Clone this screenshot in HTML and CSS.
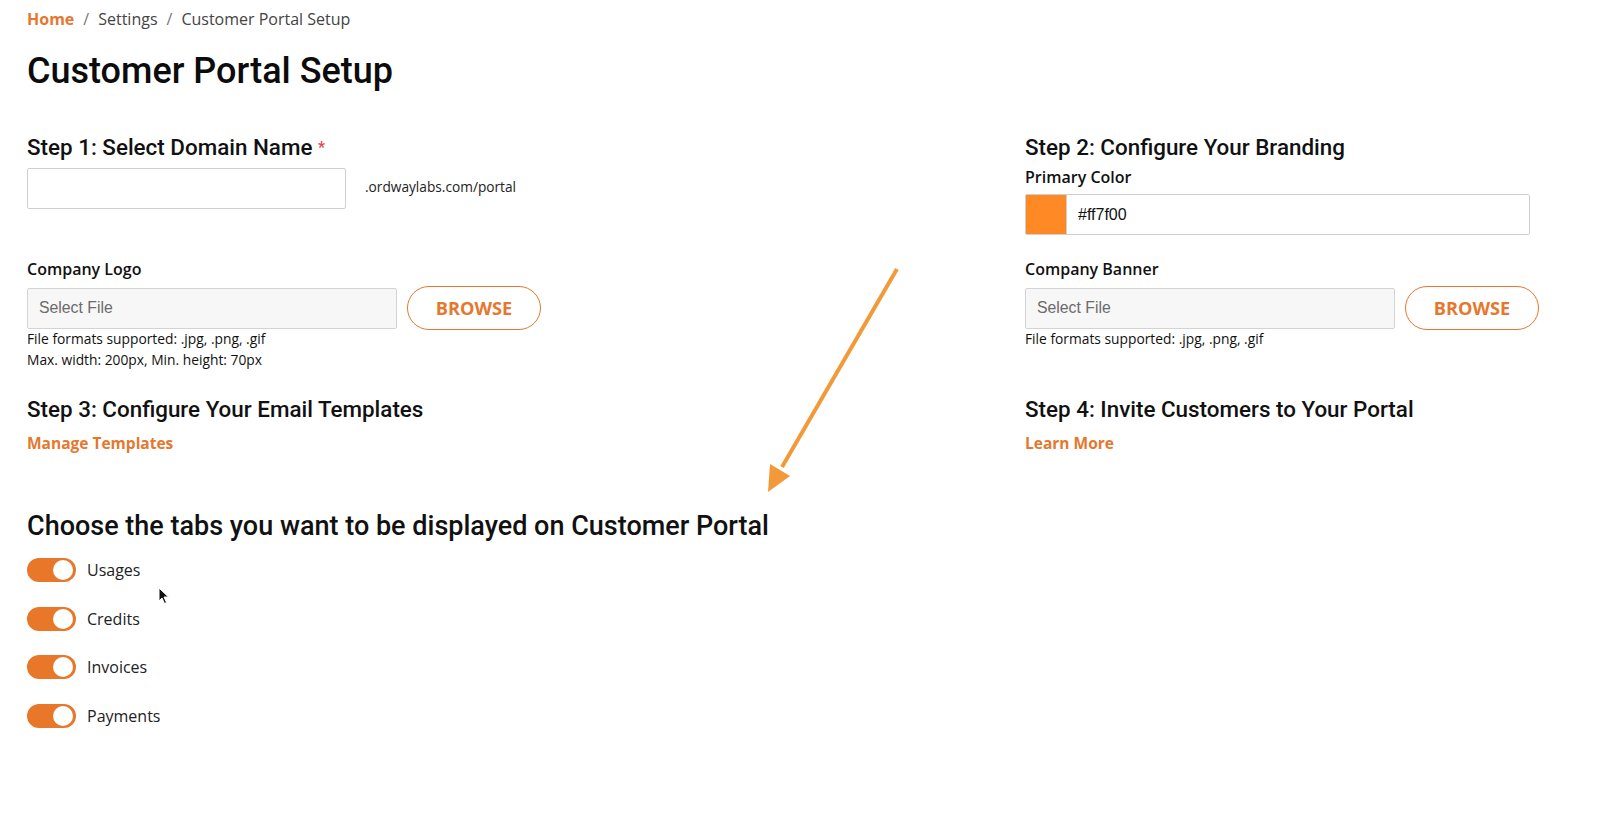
FILE: index.html
```html
<!DOCTYPE html>
<html lang="en">
<head>
    <meta charset="UTF-8">
    <meta name="viewport" content="width=device-width, initial-scale=1.0">
    <title>Customer Portal Setup</title>
    <link rel="stylesheet" href="styles.css">
</head>
<body>
    <div class="page">
        <nav class="breadcrumb">
            <a href="#" class="crumb-home">Home</a>
            <span class="sep">/</span>
            <span>Settings</span>
            <span class="sep">/</span>
            <span>Customer Portal Setup</span>
        </nav>

        <h1 class="page-title">Customer Portal Setup</h1>

        <div class="steps">
            <!-- Step 1 -->
            <div class="cell">
                <h2 class="step-title">Step 1: Select Domain Name <span class="required">*</span></h2>
                <div class="domain-row">
                    <input type="text" class="domain-input">
                    <span class="domain-suffix">.ordwaylabs.com/portal</span>
                </div>
            </div>

            <!-- Step 2 -->
            <div class="cell">
                <h2 class="step-title">Step 2: Configure Your Branding</h2>
                <label class="field-label">Primary Color</label>
                <div class="color-field">
                    <span class="swatch"></span>
                    <input type="text" class="color-input" value="#ff7f00">
                </div>
            </div>

            <div class="cell">
                <label class="field-label">Company Logo</label>
                <div class="file-row">
                    <input type="text" class="file-input" placeholder="Select File" readonly>
                    <button class="browse-btn">BROWSE</button>
                </div>
                <p class="hint">File formats supported: .jpg, .png, .gif</p>
                <p class="hint">Max. width: 200px, Min. height: 70px</p>
            </div>

            <div class="cell">
                <label class="field-label">Company Banner</label>
                <div class="file-row">
                    <input type="text" class="file-input" placeholder="Select File" readonly>
                    <button class="browse-btn">BROWSE</button>
                </div>
                <p class="hint">File formats supported: .jpg, .png, .gif</p>
            </div>

            <!-- Step 3 -->
            <div class="cell">
                <h2 class="step-title">Step 3: Configure Your Email Templates</h2>
                <a href="#" class="link">Manage Templates</a>
            </div>

            <!-- Step 4 -->
            <div class="cell">
                <h2 class="step-title">Step 4: Invite Customers to Your Portal</h2>
                <a href="#" class="link">Learn More</a>
            </div>
        </div>

        <h2 class="tabs-title">Choose the tabs you want to be displayed on Customer Portal</h2>

        <ul class="toggle-list">
            <li class="toggle-item"><span class="toggle"><span class="knob"></span></span>Usages</li>
            <li class="toggle-item"><span class="toggle"><span class="knob"></span></span>Credits</li>
            <li class="toggle-item"><span class="toggle"><span class="knob"></span></span>Invoices</li>
            <li class="toggle-item"><span class="toggle"><span class="knob"></span></span>Payments</li>
        </ul>
    </div>

    <!-- annotation arrow drawn over the page -->
    <svg class="annotation" width="1612" height="832" viewBox="0 0 1612 832">
        <line x1="897" y1="269" x2="782" y2="467" stroke="#f29a3a" stroke-width="4" stroke-linecap="butt"/>
        <polygon points="768,492 770,464 790,476" fill="#f29a3a"/>
    </svg>

    <svg class="cursor" width="12" height="18" viewBox="0 0 12 18">
        <path d="M1 1 L1 14 L4 11 L6.5 16.5 L8.5 15.5 L6 10 L10.5 10 Z" fill="#111" stroke="#fff" stroke-width="1"/>
    </svg>
</body>
</html>
```

FILE: styles.css
```css
* {
    box-sizing: border-box;
}

body {
    margin: 0;
    background: #fff;
    color: #111;
    font-family: 'Open Sans', 'Noto Sans', sans-serif;
}

.page {
    padding: 9px 27px 40px;
}

.breadcrumb {
    display: flex;
    gap: 9px;
    font-size: 16px;
    line-height: 20px;
    color: #444;
}

.breadcrumb .sep {
    color: #777;
}

.crumb-home {
    color: #e5782e;
    font-weight: 700;
    text-decoration: none;
}

.page-title {
    font-family: Roboto, sans-serif;
    font-weight: 500;
    font-size: 36px;
    line-height: 40px;
    margin: 22px 0 0;
    color: #0c0c0c;
}

.steps {
    display: grid;
    grid-template-columns: 1fr 560px;
    margin-top: 43px;
}

.cell:nth-child(3), .cell:nth-child(4) {
    padding-top: 24px;
}

.cell:nth-child(5), .cell:nth-child(6) {
    padding-top: 26px;
}

.step-title {
    font-family: Roboto, sans-serif;
    font-weight: 500;
    font-size: 22.4px;
    line-height: 26px;
    margin: 0;
    color: #111;
}

.required {
    color: #e04848;
    font-size: 16px;
    vertical-align: 2px;
}

.domain-row {
    display: flex;
    align-items: center;
    gap: 19px;
    margin-top: 7px;
}

.domain-input {
    width: 319px;
    height: 41px;
    border: 1px solid #cfcfcf;
    border-radius: 2px;
    background: #fff;
}

.domain-suffix {
    font-size: 13.7px;
    color: #222;
    margin-top: -4px;
}

.field-label {
    display: block;
    font-weight: 600;
    font-size: 16px;
    line-height: 20px;
    color: #111;
    margin-bottom: 7px;
}

.step-title + .field-label {
    margin-top: 7px;
    margin-bottom: 7px;
}

.color-field {
    display: flex;
    width: 505px;
    height: 41px;
    border: 1px solid #cfcfcf;
    border-radius: 2px;
}

.swatch {
    width: 41px;
    background: #ff8a25;
    border-right: 1px solid #cfcfcf;
}

.color-input {
    flex: 1;
    border: none;
    padding: 0 11px;
    font-family: 'Liberation Sans', Arial, sans-serif;
    font-size: 16px;
    color: #111;
    outline: none;
}

.file-row {
    display: flex;
    align-items: center;
    gap: 10px;
}

.file-input {
    width: 370px;
    height: 41px;
    border: 1px solid #d3d3d3;
    border-radius: 2px;
    background: #f7f7f7;
    padding: 0 11px;
    font-family: 'Liberation Sans', Arial, sans-serif;
    font-size: 15.8px;
    outline: none;
}

.file-input::placeholder {
    color: #6b6b6b;
}

.browse-btn {
    width: 134px;
    height: 44px;
    border: 1px solid #e5782e;
    border-radius: 22px;
    background: #fff;
    color: #e5782e;
    font-family: 'Open Sans', sans-serif;
    font-weight: 700;
    font-size: 18.2px;
    cursor: pointer;
}

.hint {
    margin: 0;
    font-size: 13.8px;
    line-height: 20.5px;
    color: #111;
}

.file-row + .hint {
    margin-top: -1px;
}

.link {
    display: inline-block;
    margin-top: 10px;
    color: #e5782e;
    font-weight: 700;
    font-size: 15.5px;
    text-decoration: none;
}

.tabs-title {
    font-family: Roboto, sans-serif;
    font-weight: 500;
    font-size: 27px;
    line-height: 32px;
    margin: 56px 0 0;
    color: #111;
}

.toggle-list {
    list-style: none;
    margin: 4px 0 0;
    padding: 0;
}

.toggle-item {
    display: flex;
    align-items: center;
    gap: 11px;
    height: 48.5px;
    font-size: 16px;
    color: #222;
}

.toggle {
    position: relative;
    width: 49px;
    height: 24px;
    border-radius: 12px;
    background: #e8772a;
}

.knob {
    position: absolute;
    right: 3px;
    top: 2px;
    width: 20px;
    height: 20px;
    border-radius: 50%;
    background: #fff;
}

.annotation {
    position: absolute;
    left: 0;
    top: 0;
    pointer-events: none;
}

.cursor {
    position: absolute;
    left: 158px;
    top: 587px;
}
```
